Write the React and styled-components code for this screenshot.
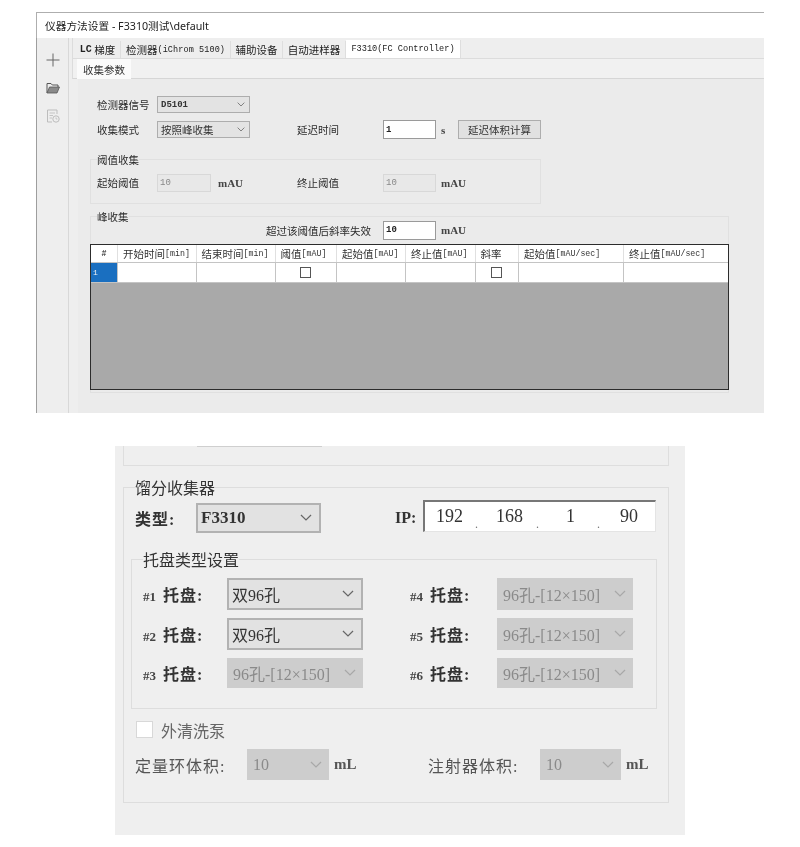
import styled, { createGlobalStyle } from "styled-components";

const GlobalStyle = createGlobalStyle`
  html, body {
    margin: 0;
    padding: 0;
    background: #fff;
  }
  body {
    width: 800px;
    height: 847px;
    overflow: hidden;
    font-family: "Liberation Serif", "Noto Sans CJK SC", serif;
  }
`;

const cjk = `"Liberation Mono", "Noto Sans CJK SC", monospace`;
const serifCjk = `"Liberation Serif", "Noto Sans CJK SC", serif`;

const Page = styled.div`
  width: 800px;
  padding-top: 12px;
  filter: blur(0.4px);
`;

/* top screenshot: method settings window */
const Win = styled.div`
  width: 728px;
  margin-left: 36px;
  height: 401px;
  display: flex;
  flex-direction: column;
  border-top: 1px solid #aeaeae;
  box-sizing: border-box;
`;

const TitleBar = styled.div`
  height: 25px;
  display: flex;
  align-items: center;
  padding-left: 8px;
  font: 10.7px "Noto Sans", "Noto Sans CJK SC", sans-serif;
  color: #222;
  border-left: 1px solid #aeaeae;
`;

const WinBody = styled.div`
  flex: 1;
  display: flex;
  background: #eeeeee;
`;

const Rail = styled.div`
  width: 32px;
  border-left: 1px solid #9e9e9e;
  box-sizing: border-box;
  display: flex;
  flex-direction: column;
  align-items: center;
  padding: 15px 0 0 1px;
  gap: 15px;
`;

const Main = styled.div`
  flex: 1;
  min-width: 0;
  display: flex;
  flex-direction: column;
  padding-left: 3px;
  border-left: 1px solid #d8d8d8;
`;

const TabStrip = styled.div`
  height: 21px;
  display: flex;
  align-items: flex-end;
  padding-left: 2px;
  border-bottom: 1px solid #dcdcdc;
  border-left: 1px solid #dcdcdc;
  box-sizing: border-box;
`;

const Tab = styled.div`
  height: ${(p) => (p.$active ? "18px" : "17px")};
  width: ${(p) => p.$w}px;
  display: flex;
  align-items: center;
  justify-content: center;
  box-sizing: border-box;
  background: ${(p) => (p.$active ? "#fff" : "transparent")};
  border-right: 1px solid #dedede;
  font: 10.5px "Noto Sans CJK SC", sans-serif;
  color: #222;
  white-space: nowrap;
`;

const TabLatin = styled.span`
  font: ${(p) => p.$size || 8.5}px "Liberation Mono", monospace;
  letter-spacing: ${(p) => p.$ls || 0}px;
  font-weight: ${(p) => p.$weight || 400};
`;

const SubStrip = styled.div`
  height: 20px;
  display: flex;
  align-items: flex-end;
  background: #f1f1f1;
  border-bottom: 1px solid #d6d6d6;
  border-left: 1px solid #dcdcdc;
  box-sizing: border-box;
`;

const SubTab = styled.div`
  width: 54px;
  height: 20px;
  margin: 0 0 -1px 4px;
  background: #fbfbfb;
  display: flex;
  align-items: center;
  justify-content: center;
  font: 10.5px "Noto Sans CJK SC", sans-serif;
  color: #333;
`;

const Panel = styled.div`
  flex: 1;
  margin-left: 6px;
  background: #ebebeb;
  padding: 17px 0 0 12px;
`;

const Row = styled.div`
  display: flex;
  align-items: center;
  height: ${(p) => p.$h || 18}px;
  margin-top: ${(p) => p.$mt || 0}px;
`;

const Label = styled.span`
  width: ${(p) => p.$w}px;
  padding-left: ${(p) => p.$pl || 0}px;
  box-sizing: border-box;
  flex-shrink: 0;
  font: 10.5px "Noto Sans CJK SC", sans-serif;
  color: #2c2c2c;
  white-space: nowrap;
`;

const WinSelect = styled.div`
  width: 93px;
  height: 17px;
  box-sizing: border-box;
  border: 1px solid #adadad;
  background: #e3e3e3;
  display: flex;
  align-items: center;
  justify-content: space-between;
  padding: 0 4px 0 3px;
  font: ${(p) => (p.$latin ? "bold 9px" : "10.5px")} ${cjk};
  color: #333;
`;

const WinInput = styled.div`
  width: ${(p) => p.$w || 53}px;
  height: ${(p) => (p.$off ? 18 : 19)}px;
  box-sizing: border-box;
  background: ${(p) => (p.$off ? "#e8e8e8" : "#fff")};
  border: 1px solid ${(p) => (p.$off ? "#d8d8d8" : "#9a9a9a")};
  display: flex;
  align-items: center;
  padding-left: 2px;
  font: ${(p) => (p.$off ? "9px" : "bold 9px")} "Liberation Mono", monospace;
  color: ${(p) => (p.$off ? "#888" : "#222")};
`;

const Unit = styled.span`
  margin-left: ${(p) => p.$ml || 5}px;
  width: ${(p) => p.$w || "auto"};
  font: bold 11px "Liberation Serif", serif;
  color: #444;
`;

const CalcButton = styled.div`
  width: 83px;
  height: 19px;
  margin-left: 11px;
  box-sizing: border-box;
  background: #e1e1e1;
  border: 1px solid #adadad;
  display: flex;
  align-items: center;
  justify-content: center;
  font: 10.5px "Noto Sans CJK SC", sans-serif;
  color: #333;
`;

const WinGroup = styled.fieldset`
  margin: ${(p) => p.$mt}px 0 0 0;
  padding: 0 0 0 6px;
  width: ${(p) => p.$w}px;
  height: ${(p) => p.$h}px;
  box-sizing: border-box;
  border: 1px solid #e0e0e0;
  min-width: 0;
`;

const WinLegend = styled.legend`
  padding: 0;
  height: 14px;
  line-height: 14px;
  font: 10.5px "Noto Sans CJK SC", sans-serif;
  color: #2c2c2c;
`;

const PeakRow = styled.div`
  display: flex;
  align-items: center;
  height: 18px;
  margin: -2px 0 0 169px;
`;

const Grid = styled.div`
  width: 639px;
  height: 146px;
  margin: 5px 0 0 -7px;
  box-sizing: border-box;
  border: 1px solid #2c2c2c;
  background: #a9a9a9;
`;

const GridRow = styled.div`
  display: grid;
  grid-template-columns: 27px 78.5px 79px 61.5px 69px 69.5px 43.5px 105px 1fr;
  height: ${(p) => p.$h}px;
  background: #fff;
  border-bottom: 1px solid #c4c4c4;
  box-sizing: border-box;
`;

const HeadCell = styled.div`
  display: flex;
  align-items: center;
  padding-left: ${(p) => p.$pl ?? 5}px;
  justify-content: ${(p) => (p.$center ? "center" : "flex-start")};
  font: 10.5px "Noto Sans CJK SC", sans-serif;
  color: #333;
  white-space: nowrap;
  overflow: hidden;
  border-right: 1px solid #e0e0e0;
  &:last-child {
    border-right: 0;
  }
`;

const Cell = styled.div`
  display: flex;
  align-items: center;
  justify-content: center;
  border-right: 1px solid #c4c4c4;
  &:last-child {
    border-right: 0;
  }
`;

const IndexCell = styled(Cell)`
  background: #1a6fc0;
  color: #f2f2f2;
  justify-content: flex-start;
  padding-left: 2px;
  font: 8px "Liberation Mono", monospace;
`;

const GridCheck = styled.span`
  width: 11px;
  height: 11px;
  box-sizing: border-box;
  border: 1px solid #555;
  background: #fff;
`;

/* bottom screenshot: fraction collector settings */
const Sheet = styled.div`
  width: 570px;
  height: 389px;
  margin: 33px 0 0 115px;
  padding: 0 16px 0 8px;
  box-sizing: border-box;
  background: #efefef;
`;

const TopStub = styled.div`
  height: 20px;
  box-sizing: border-box;
  border: 1px solid #dedede;
  border-top: 0;
`;

const StubLine = styled.div`
  width: 125px;
  height: 1px;
  margin-left: 73px;
  background: #cfcfcf;
`;

const Group = styled.fieldset`
  margin: ${(p) => p.$mt}px 0 0 ${(p) => p.$ml || 0}px;
  padding: ${(p) => p.$pad};
  height: ${(p) => p.$h}px;
  box-sizing: border-box;
  border: 1px solid #dddddd;
  min-width: 0;
`;

const Legend = styled.legend`
  padding: 0;
  font: 16px/20px "Noto Sans CJK SC", sans-serif;
  color: #333;
`;

const FormRow = styled.div`
  display: flex;
  align-items: center;
  height: ${(p) => p.$h || 30}px;
  margin-top: ${(p) => p.$mt || 0}px;
`;

const FormLabel = styled.span`
  width: ${(p) => p.$w}px;
  flex-shrink: 0;
  margin-left: ${(p) => p.$ml || 0}px;
  font: 16px ${serifCjk};
  font-weight: ${(p) => (p.$bold ? 700 : 400)};
  color: ${(p) => p.$color || "#333"};
  letter-spacing: ${(p) => p.$ls || 0}px;
  white-space: nowrap;
`;

const Num = styled.span`
  font-size: 13px;
  font-weight: 700;
  letter-spacing: 0;
  margin-right: 2px;
  color: #444;
`;

const Combo = styled.div`
  width: ${(p) => p.$w}px;
  height: ${(p) => p.$h || 30}px;
  box-sizing: border-box;
  flex-shrink: 0;
  border: ${(p) => (p.$off ? "0" : "2px solid #b2b2b2")};
  background: ${(p) => (p.$off ? "#cdcdcd" : "#e2e2e2")};
  display: flex;
  align-items: center;
  justify-content: space-between;
  padding: ${(p) => (p.$off ? "0 7px 0 6px" : "0 7px 0 3px")};
  font: ${(p) => (p.$bold ? "bold 17px" : "16px")} ${serifCjk};
  color: ${(p) => (p.$off ? "#8a8a8a" : "#333")};
  white-space: nowrap;
`;

const IpBox = styled.div`
  width: 233px;
  height: 32px;
  margin-top: -4px;
  box-sizing: border-box;
  background: #fff;
  border-top: 2px solid #777;
  border-left: 2px solid #777;
  border-right: 1px solid #e4e4e4;
  border-bottom: 1px solid #e4e4e4;
  display: grid;
  grid-template-columns: 60px 62px 61px 1fr;
  align-items: center;
  padding-left: 11px;
  font: 18px "Liberation Serif", serif;
  color: #333;
`;

const Octet = styled.span`
  padding-left: ${(p) => p.$pl || 0}px;
  position: relative;
`;

const Dot = styled.span`
  position: absolute;
  right: ${(p) => p.$r}px;
  bottom: -5px;
  font-size: 12px;
  color: #777;
`;

const TrayCols = styled.div`
  display: grid;
  grid-template-columns: 267px 1fr;
  margin-top: 9px;
`;

const TrayCell = styled.div`
  display: flex;
  align-items: center;
  height: ${(p) => p.$h}px;
`;

const TrayStack = styled.div`
  display: flex;
  flex-direction: column;
  gap: 8px;
`;

const WashRow = styled.div`
  display: flex;
  align-items: center;
  gap: 8px;
  margin: 12px 0 0 1px;
  height: 17px;
  font: 16px "Noto Sans CJK SC", sans-serif;
  color: #666;
`;

const WashCheck = styled.span`
  width: 17px;
  height: 17px;
  box-sizing: border-box;
  border: 1px solid #d8d8d8;
  background: #fff;
`;

const VolUnit = styled.span`
  margin-left: 5px;
  width: ${(p) => p.$w || "auto"};
  font: bold 15px "Liberation Serif", serif;
  color: #555;
`;

const Chevron = ({ size = 9, color = "#666", sw = 1 }) => (
  <svg width={size} height={size * 0.6} viewBox="0 0 10 6" fill="none">
    <path d="M0.8 0.8 L5 5 L9.2 0.8" stroke={color} strokeWidth={sw} />
  </svg>
);

const PlusIcon = () => (
  <svg width="14" height="14" viewBox="0 0 14 14" fill="none">
    <path d="M7 0.5V13.5M0.5 7H13.5" stroke="#666" strokeWidth="1" />
  </svg>
);

const FolderIcon = () => (
  <svg width="14" height="12" viewBox="0 0 14 12" fill="none">
    <path d="M1 11V1.5H5L6.3 3H12V5" stroke="#555" strokeWidth="1" />
    <path d="M1 11L3.5 5H13.5L11 11Z" fill="#8a8a8a" stroke="#555" strokeWidth="0.8" />
  </svg>
);

const LogIcon = () => (
  <svg width="14" height="14" viewBox="0 0 14 14" fill="none">
    <path d="M11 5V1H1.5V13H6" stroke="#bdbdbd" strokeWidth="1" />
    <path d="M3.5 4H9M3.5 6.5H7M3.5 9H6" stroke="#c4c4c4" strokeWidth="1" />
    <circle cx="10" cy="10" r="3.2" stroke="#bdbdbd" strokeWidth="1" />
    <path d="M10 8.4V10H11.4" stroke="#bdbdbd" strokeWidth="0.8" />
  </svg>
);

const headers = [
  ["", "#"],
  ["开始时间", "[min]"],
  ["结束时间", "[min]"],
  ["阈值", "[mAU]"],
  ["起始值", "[mAU]"],
  ["终止值", "[mAU]"],
  ["斜率", ""],
  ["起始值", "[mAU/sec]"],
  ["终止值", "[mAU/sec]"],
];

const trayLeft = [
  ["#1", "双96孔", false, 32],
  ["#2", "双96孔", false, 32],
  ["#3", "96孔-[12×150]", true, 30],
];

const trayRight = [
  ["#4", "96孔-[12×150]", true, 32],
  ["#5", "96孔-[12×150]", true, 32],
  ["#6", "96孔-[12×150]", true, 30],
];

const TrayItem = ({ no, value, off, height, width }) => (
  <TrayCell $h={height}>
    <FormLabel $w={width} $bold $ls={1}>
      <Num>{no}</Num> 托盘:
    </FormLabel>
    <Combo $w={136} $h={height} $off={off}>
      {value}
      <Chevron size={12} color={off ? "#a8a8a8" : "#666"} />
    </Combo>
  </TrayCell>
);

function App() {
  return (
    <>
      <GlobalStyle />
      <Page>
        <Win>
          <TitleBar>仪器方法设置 - F3310测试\default</TitleBar>
          <WinBody>
            <Rail>
              <PlusIcon />
              <FolderIcon />
              <LogIcon />
            </Rail>
            <Main>
              <TabStrip>
                <Tab $w={46}>
                  <TabLatin $size={10} $weight={700}>LC</TabLatin>&nbsp;梯度
                </Tab>
                <Tab $w={110}>
                  检测器<TabLatin $ls={0.1}>(iChrom 5100)</TabLatin>
                </Tab>
                <Tab $w={52}>辅助设备</Tab>
                <Tab $w={63}>自动进样器</Tab>
                <Tab $w={115} $active>
                  <TabLatin $size={8.6}>F3310(FC Controller)</TabLatin>
                </Tab>
              </TabStrip>
              <SubStrip>
                <SubTab>收集参数</SubTab>
              </SubStrip>
              <Panel>
                <Row $h={17}>
                  <Label $w={67} $pl={7}>检测器信号</Label>
                  <WinSelect $latin>
                    D5101
                    <Chevron size={8} />
                  </WinSelect>
                </Row>
                <Row $h={19} $mt={7}>
                  <Label $w={67} $pl={7}>收集模式</Label>
                  <WinSelect>
                    按照峰收集
                    <Chevron size={8} />
                  </WinSelect>
                  <Label $w={133} $pl={47}>延迟时间</Label>
                  <WinInput>1</WinInput>
                  <Unit $w="6px">s</Unit>
                  <CalcButton>延迟体积计算</CalcButton>
                </Row>
                <WinGroup $mt={13} $w={451} $h={52}>
                  <WinLegend>阈值收集</WinLegend>
                  <Row $h={19} $mt={7}>
                    <Label $w={60}>起始阈值</Label>
                    <WinInput $off $w={54}>10</WinInput>
                    <Unit $ml={7} $w="32px">mAU</Unit>
                    <Label $w={133} $pl={47}>终止阈值</Label>
                    <WinInput $off>10</WinInput>
                    <Unit>mAU</Unit>
                  </Row>
                </WinGroup>
                <WinGroup $mt={5} $w={639} $h={184}>
                  <WinLegend>峰收集</WinLegend>
                  <PeakRow>
                    <Label $w={117}>超过该阈值后斜率失效</Label>
                    <WinInput>10</WinInput>
                    <Unit>mAU</Unit>
                  </PeakRow>
                  <Grid>
                    <GridRow $h={18}>
                      {headers.map(([zh, latin], i) => (
                        <HeadCell key={i} $pl={i === 0 ? 0 : 5} $center={i === 0}>
                          {zh}
                          <TabLatin $size={8.3} $weight={i === 0 ? 700 : 400}>{latin}</TabLatin>
                        </HeadCell>
                      ))}
                    </GridRow>
                    <GridRow $h={20}>
                      <IndexCell>1</IndexCell>
                      <Cell />
                      <Cell />
                      <Cell><GridCheck /></Cell>
                      <Cell />
                      <Cell />
                      <Cell><GridCheck /></Cell>
                      <Cell />
                      <Cell />
                    </GridRow>
                  </Grid>
                </WinGroup>
              </Panel>
            </Main>
          </WinBody>
        </Win>

        <Sheet>
          <TopStub>
            <StubLine />
          </TopStub>
          <Group $mt={11} $h={326} $pad="0 11px 0 11px">
            <Legend>馏分收集器</Legend>
            <FormRow $h={30} $mt={6}>
              <FormLabel $w={61} $bold $ls={1}>类型:</FormLabel>
              <Combo $w={125} $bold>
                F3310
                <Chevron size={12} />
              </Combo>
              <FormLabel $w={28} $ml={74} $bold>IP:</FormLabel>
              <IpBox>
                <Octet>192<Dot $r={18}>.</Dot></Octet>
                <Octet>168<Dot $r={19}>.</Dot></Octet>
                <Octet $pl={8}>1<Dot $r={19}>.</Dot></Octet>
                <Octet $pl={1}>90</Octet>
              </IpBox>
            </FormRow>
            <Group $mt={16} $ml={-4} $h={160} $pad="0 0 0 11px">
              <Legend>托盘类型设置</Legend>
              <TrayCols>
                <TrayStack>
                  {trayLeft.map(([no, value, off, height]) => (
                    <TrayItem key={no} no={no} value={value} off={off} height={height} width={84} />
                  ))}
                </TrayStack>
                <TrayStack>
                  {trayRight.map(([no, value, off, height]) => (
                    <TrayItem key={no} no={no} value={value} off={off} height={height} width={87} />
                  ))}
                </TrayStack>
              </TrayCols>
            </Group>
            <WashRow>
              <WashCheck />
              外清洗泵
            </WashRow>
            <FormRow $h={31} $mt={11}>
              <FormLabel $w={112} $color="#555" $ls={1}>定量环体积:</FormLabel>
              <Combo $w={82} $h={31} $off>
                10
                <Chevron size={12} color="#a8a8a8" />
              </Combo>
              <VolUnit $w="94px">mL</VolUnit>
              <FormLabel $w={112} $color="#555" $ls={1}>注射器体积:</FormLabel>
              <Combo $w={81} $h={31} $off>
                10
                <Chevron size={12} color="#a8a8a8" />
              </Combo>
              <VolUnit>mL</VolUnit>
            </FormRow>
          </Group>
        </Sheet>
      </Page>
    </>
  );
}

export default App;
